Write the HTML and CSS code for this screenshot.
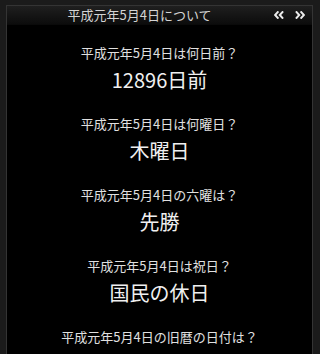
FILE: index.html
```html
<!DOCTYPE html>
<html lang="ja">
<head>
<meta charset="utf-8">
<link rel="stylesheet" href="styles.css">
</head>
<body>
<div class="panel">
  <div class="header">
    <div class="title">平成元年5月4日について</div>
    <div class="nav">
      <svg class="arrow" width="10" height="8" viewBox="0 0 10 8"><path d="M4.4 0.4 L1.1 4 L4.4 7.6 M9.1 0.4 L5.8 4 L9.1 7.6" fill="none" stroke="#ececec" stroke-width="2"/></svg>
      <svg class="arrow" width="10" height="8" viewBox="0 0 10 8"><path d="M0.9 0.4 L4.2 4 L0.9 7.6 M5.6 0.4 L8.9 4 L5.6 7.6" fill="none" stroke="#ececec" stroke-width="2"/></svg>
    </div>
  </div>
  <div class="content">
    <div class="item">
      <div class="q">平成元年5月4日は何日前？</div>
      <div class="a">12896日前</div>
    </div>
    <div class="item">
      <div class="q">平成元年5月4日は何曜日？</div>
      <div class="a">木曜日</div>
    </div>
    <div class="item">
      <div class="q">平成元年5月4日の六曜は？</div>
      <div class="a">先勝</div>
    </div>
    <div class="item">
      <div class="q">平成元年5月4日は祝日？</div>
      <div class="a">国民の休日</div>
    </div>
    <div class="item">
      <div class="q">平成元年5月4日の旧暦の日付は？</div>
    </div>
  </div>
</div>
</body>
</html>
```
FILE: styles.css
```css
html, body {
  margin: 0;
  padding: 0;
  background: #1b1b1b;
  height: 100%;
  overflow: hidden;
}
body {
  font-family: "Noto Sans CJK JP", "Noto Sans", sans-serif;
  color: #e6e6e6;
  padding-top: 5px;
  box-sizing: border-box;
}
.panel {
  margin: 0 7px 0 6px;
  border: 1px solid #343434;
  border-bottom: none;
  background: #000;
  height: 100%;
  box-sizing: border-box;
  overflow: hidden;
}
.header {
  height: 18px;
  display: flex;
  align-items: center;
  background: linear-gradient(#1f1f1f, #0c0c0c);
  border-bottom: 1px solid #0a0a0a;
}
.title {
  flex: 1;
  text-align: center;
  font-size: 13px;
  line-height: 18px;
  color: #d4d4d4;
}
.nav {
  width: 40px;
  display: flex;
  align-items: center;
  gap: 11px;
  padding-left: 2px;
  box-sizing: border-box;
}
.arrow {
  display: block;
}
.content {
  padding-top: 19px;
  display: flex;
  flex-direction: column;
  gap: 21px;
}
.item {
  display: flex;
  flex-direction: column;
  align-items: center;
  gap: 4px;
}
.q {
  font-size: 13px;
  line-height: 18px;
  color: #e0e0e0;
}
.a {
  font-size: 20px;
  line-height: 28px;
  color: #f0f0f0;
}
```
